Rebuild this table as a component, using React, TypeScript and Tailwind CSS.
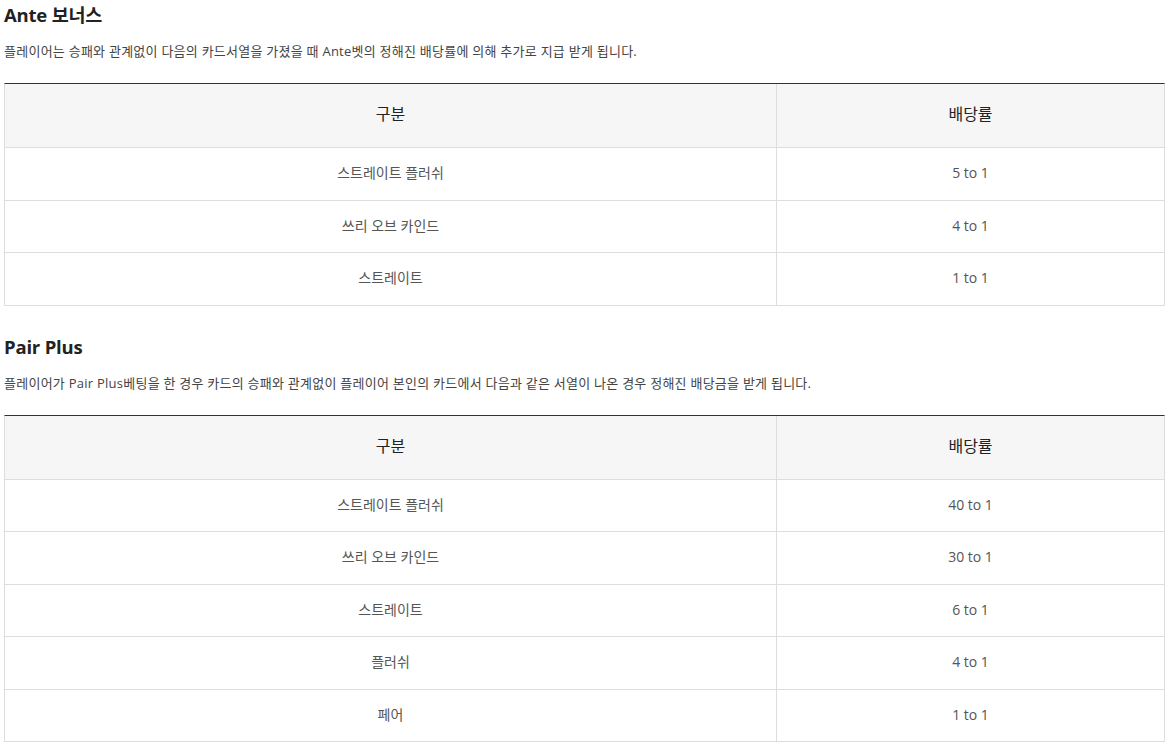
import React from "react";

type Row = [string, string];

const ante: Row[] = [
  ["스트레이트 플러쉬", "5 to 1"],
  ["쓰리 오브 카인드", "4 to 1"],
  ["스트레이트", "1 to 1"],
];

const pair: Row[] = [
  ["스트레이트 플러쉬", "40 to 1"],
  ["쓰리 오브 카인드", "30 to 1"],
  ["스트레이트", "6 to 1"],
  ["플러쉬", "4 to 1"],
  ["페어", "1 to 1"],
];

function PayTable({ rows }: { rows: Row[] }) {
  return (
    <div className="ml-[4px] w-[1161px] border-t border-t-[#333] border-x border-x-[#ddd]">
      <div className="grid grid-cols-[772px_1fr] border-b border-[#ddd] bg-[#f6f6f6]">
        <div className="h-[63px] pb-[3px] flex items-center justify-center border-r border-[#ddd] text-[16px] font-normal text-[#222]">
          구분
        </div>
        <div className="h-[63px] pb-[3px] flex items-center justify-center text-[16px] font-normal text-[#222]">
          배당률
        </div>
      </div>
      {rows.map(([a, b], i) => (
        <div key={i} className="grid grid-cols-[772px_1fr] border-b border-[#ddd]">
          <div className="h-[51.5px] pb-[2px] flex items-center justify-center border-r border-[#ddd] text-[14px] text-[#555]">
            {a}
          </div>
          <div className="h-[51.5px] pb-[2px] flex items-center justify-center text-[14px] text-[#555]">
            {b}
          </div>
        </div>
      ))}
    </div>
  );
}

export default function App() {
  return (
    <div
      className="w-[1170px] h-[748px] overflow-hidden bg-white"
      style={{ fontFamily: '"Open Sans", "Noto Sans CJK KR", sans-serif' }}
    >
      <section>
        <h2 className="ml-[4px] h-[30px] leading-[30px] text-[18.5px] font-bold text-[#222] tracking-[-0.2px]">
          Ante 보너스
        </h2>
        <p className="ml-[4px] mt-[11px] h-[20px] leading-[20px] text-[13px] text-[#444] tracking-[0.25px]">
          플레이어는 승패와 관계없이 다음의 카드서열을 가졌을 때 Ante벳의 정해진 배당률에 의해 추가로 지급 받게 됩니다.
        </p>
        <div className="mt-[22px]">
          <PayTable rows={ante} />
        </div>
      </section>
      <section className="mt-[26px]">
        <h2 className="ml-[4px] h-[30px] leading-[30px] text-[18.5px] font-bold text-[#222] tracking-[-0.2px]">
          Pair Plus
        </h2>
        <p className="ml-[4px] mt-[11px] h-[20px] leading-[20px] text-[13px] text-[#444] tracking-[0.25px]">
          플레이어가 Pair Plus베팅을 한 경우 카드의 승패와 관계없이 플레이어 본인의 카드에서 다음과 같은 서열이 나온 경우 정해진 배당금을 받게 됩니다.
        </p>
        <div className="mt-[22px]">
          <PayTable rows={pair} />
        </div>
      </section>
    </div>
  );
}
